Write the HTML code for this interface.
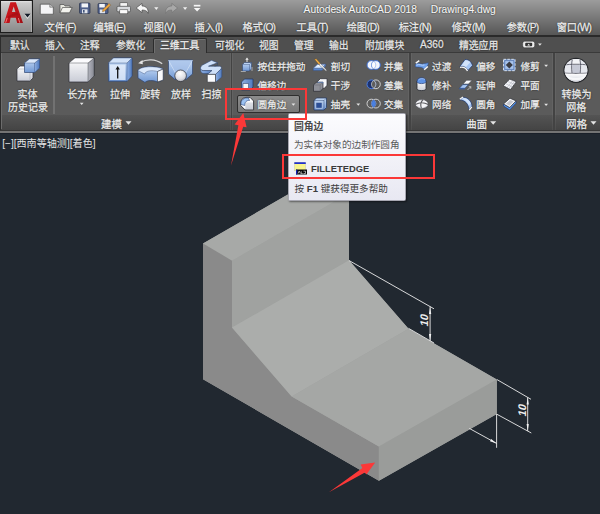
<!DOCTYPE html>
<html><head><meta charset="utf-8">
<style>
html,body{margin:0;padding:0;}
body{width:600px;height:514px;overflow:hidden;position:relative;background:#212830;font-family:"Liberation Sans","Noto Sans CJK SC",sans-serif;}
.abs{position:absolute;}
.t{position:absolute;white-space:nowrap;line-height:1;color:#e6e6e6;}
.m,.tb,.rl{-webkit-text-stroke:0.300px #e8e8e8;text-shadow:0 0 1.200px rgba(0,0,0,0.850),0 0 1.200px rgba(0,0,0,0.700);}
#title{left:0;top:0;width:600px;height:35px;background:linear-gradient(#9c9c9c,#565656);}
#menu{left:0;top:34.600px;width:600px;height:2.400px;background:#2a2a2a;}
#tabs{left:0;top:37px;width:600px;height:16.300px;background:#4f4f4f;border-bottom:1.300px solid #3a3a3a;box-sizing:border-box;}
#ribbon{left:0;top:53.300px;width:600px;height:62.100px;background:#5b5b5b;}
#rtitle{left:0;top:115.400px;width:600px;height:14.200px;background:linear-gradient(#545454,#444444);}
#rbot{left:0;top:129.600px;width:600px;height:4.900px;background:linear-gradient(#363636 0,#363636 1.200px,#747474 1.200px,#747474 3.400px,#1a2029 3.400px);}
.l{letter-spacing:-0.800px;}
.m{font-size:10.200px;top:22.800px;color:#f0f0f0;}
.tb{font-size:9.8px;top:40.5px;color:#e0e0e0;}
.rl{font-size:10px;color:#ececec;}
.sep{position:absolute;width:1.400px;background:#434343;top:53.300px;height:76.500px;box-shadow:-1px 0 0 rgba(255,255,255,0.050),1px 0 0 rgba(255,255,255,0.050);}
</style></head><body>
<div id="title" class="abs"></div>
<div id="menu" class="abs"></div>
<div id="tabs" class="abs"></div>
<div id="ribbon" class="abs"></div>
<div id="rtitle" class="abs"></div>
<div id="rbot" class="abs"></div>

<!-- app button -->
<div class="abs" style="left:0;top:0;width:33px;height:33px;background:#1c1c1c;"></div>
<div class="abs" style="left:1.200px;top:0.800px;width:30.600px;height:31.400px;background:linear-gradient(#e6e6e6 0,#cbcbcb 2px,#aaaaaa 50%,#8b8b8b 100%);box-shadow:inset -0.800px 0 0 #b4b4b4;"></div>
<svg class="abs" style="left:0;top:0;" width="34" height="34" viewBox="0 0 34 34">
<defs><linearGradient id="ga" x1="0" y1="0" x2="1" y2="1"><stop offset="0" stop-color="#d81e24"/><stop offset="0.5" stop-color="#c0141a"/><stop offset="1" stop-color="#a00c12"/></linearGradient></defs>
<path fill-rule="evenodd" d="M10.400,2.300L15.900,2.300L23,23L17.200,23L15.800,17.700L10.600,17.700L9.600,23L4,23Z M13.700,6.600L15.400,11.900L11.900,11.900Z" fill="url(#ga)"/>
<path d="M8,16.500C11,14.500 14.500,13 17.500,12.300L18.500,15C15,15.300 11.500,16.300 8.500,18.500Z" fill="#9c0c12" opacity="0.550"/>
<path d="M5.800,22.300l1.300,-4M19.600,22.300l-1.100,-3.800" stroke="#f27878" stroke-width="1" fill="none" stroke-linecap="round"/>
<path d="M24.300,14.600h6.400l-3.200,4.500z" fill="#e4e4e4"/>
<path d="M24.500,13.700h6l-3,3.700z" fill="#141c28"/>
</svg>
<!-- title text -->
<span class="t" style="left:303.600px;top:4.500px;font-size:10.250px;color:#f6f6f6;-webkit-text-stroke:0.200px #f6f6f6;text-shadow:0 0 1.200px rgba(0,0,0,0.800),0 0 1.200px rgba(0,0,0,0.600);">Autodesk AutoCAD 2018</span>
<span class="t" style="left:430.800px;top:4.500px;font-size:10.250px;color:#f6f6f6;-webkit-text-stroke:0.200px #f6f6f6;text-shadow:0 0 1.200px rgba(0,0,0,0.800),0 0 1.200px rgba(0,0,0,0.600);">Drawing4.dwg</span>

<!-- menu -->
<span class="t m" style="left:44.5px;">文件<span class="l">(F)</span></span>
<span class="t m" style="left:93.5px;">编辑<span class="l">(E)</span></span>
<span class="t m" style="left:143.5px;">视图<span class="l">(V)</span></span>
<span class="t m" style="left:194.5px;">插入<span class="l">(I)</span></span>
<span class="t m" style="left:242.5px;">格式<span class="l">(O)</span></span>
<span class="t m" style="left:296.5px;">工具<span class="l">(T)</span></span>
<span class="t m" style="left:346.7px;">绘图<span class="l">(D)</span></span>
<span class="t m" style="left:398.7px;">标注<span class="l">(N)</span></span>
<span class="t m" style="left:451.7px;">修改<span class="l">(M)</span></span>
<span class="t m" style="left:506.7px;">参数<span class="l">(P)</span></span>
<span class="t m" style="left:556.7px;">窗口<span class="l">(W)</span></span>

<!-- tabs -->
<div class="abs" style="left:153.300px;top:38px;width:53.500px;height:15.400px;background:#5b5b5b;border:1.200px solid #2c2c2c;border-bottom:none;box-sizing:border-box;border-radius:2px 2px 0 0;box-shadow:inset 1px 1px 0 #707070;"></div>
<span class="t tb" style="left:10px;">默认</span>
<span class="t tb" style="left:45px;">插入</span>
<span class="t tb" style="left:80px;">注释</span>
<span class="t tb" style="left:116px;">参数化</span>
<span class="t tb" style="left:160px;color:#fff;">三维工具</span>
<span class="t tb" style="left:215px;">可视化</span>
<span class="t tb" style="left:259px;">视图</span>
<span class="t tb" style="left:294px;">管理</span>
<span class="t tb" style="left:329px;">输出</span>
<span class="t tb" style="left:365px;">附加模块</span>
<span class="t tb" style="left:420px;font-size:10.100px;top:40.300px;">A360</span>
<span class="t tb" style="left:459px;">精选应用</span>

<div class="abs" style="left:0;top:37px;width:1.400px;height:93px;background:#2c2c2c;"></div><div class="abs" style="left:1.400px;top:53.300px;width:1.100px;height:76px;background:#6c6c6c;"></div>
<!-- ribbon separators -->
<div class="abs" style="left:53px;top:56px;width:2.100px;height:58px;background:#727272;"></div>
<div class="sep" style="left:230.900px;"></div>
<div class="sep" style="left:409.300px;"></div>
<div class="sep" style="left:553.300px;"></div>

<div class="abs" style="left:237px;top:94.700px;width:63px;height:18.300px;box-sizing:border-box;border:1.100px solid #2e2e2e;border-radius:2px;background:linear-gradient(#8c8c8c,#828282 50%,#797979);"></div>
<!-- ribbon labels -->
<span class="t rl" style="left:17.6px;top:89.5px;">实体</span>
<span class="t rl" style="left:8px;top:102.800px;">历史记录</span>
<span class="t rl" style="left:67.2px;top:89.5px;">长方体</span>
<span class="t rl" style="left:110px;top:89.5px;">拉伸</span>
<span class="t rl" style="left:140.3px;top:89.5px;">旋转</span>
<span class="t rl" style="left:171px;top:89.5px;">放样</span>
<span class="t rl" style="left:201.4px;top:89.5px;">扫掠</span>
<span class="t rl" style="left:101px;top:119.700px;font-size:10.400px;">建模</span>

<span class="t rl" style="left:257.5px;top:61.9px;font-size:9.600px;">按住并拖动</span>
<span class="t rl" style="left:257.5px;top:80.9px;font-size:9.600px;">偏移边</span>
<span class="t rl" style="left:257.5px;top:99.9px;font-size:9.600px;">圆角边</span>
<span class="t rl" style="left:330.8px;top:61.9px;font-size:9.600px;">剖切</span>
<span class="t rl" style="left:330.8px;top:80.9px;font-size:9.600px;">干涉</span>
<span class="t rl" style="left:330.8px;top:99.9px;font-size:9.600px;">抽壳</span>
<span class="t rl" style="left:384px;top:61.9px;font-size:9.600px;">并集</span>
<span class="t rl" style="left:384px;top:80.9px;font-size:9.600px;">差集</span>
<span class="t rl" style="left:384px;top:99.9px;font-size:9.600px;">交集</span>
<span class="t rl" style="left:432.1px;top:61.9px;font-size:9.600px;">过渡</span>
<span class="t rl" style="left:432.1px;top:80.9px;font-size:9.600px;">修补</span>
<span class="t rl" style="left:432.1px;top:99.9px;font-size:9.600px;">网络</span>
<span class="t rl" style="left:476.2px;top:61.9px;font-size:9.600px;">偏移</span>
<span class="t rl" style="left:476.2px;top:80.9px;font-size:9.600px;">延伸</span>
<span class="t rl" style="left:476.2px;top:99.9px;font-size:9.600px;">圆角</span>
<span class="t rl" style="left:520.5px;top:61.9px;font-size:9.600px;">修剪</span>
<span class="t rl" style="left:520.5px;top:80.9px;font-size:9.600px;">平面</span>
<span class="t rl" style="left:520.5px;top:99.9px;font-size:9.600px;">加厚</span>
<span class="t rl" style="left:466.3px;top:119.700px;font-size:10.400px;">曲面</span>
<span class="t rl" style="left:561.5px;top:89.5px;">转换为</span>
<span class="t rl" style="left:566.3px;top:102.800px;">网格</span>
<span class="t rl" style="left:566.3px;top:119.700px;font-size:10.400px;">网格</span>


<!-- ICONS -->
<svg class="abs" style="left:0;top:0;" width="600" height="133" viewBox="0 0 600 133">
<defs>
<linearGradient id="gw" x1="0" y1="0" x2="0" y2="1"><stop offset="0" stop-color="#ffffff"/><stop offset="1" stop-color="#c9ccd6"/></linearGradient>
<linearGradient id="gb" x1="0" y1="0" x2="0" y2="1"><stop offset="0" stop-color="#c5daf5"/><stop offset="1" stop-color="#6f97d4"/></linearGradient>
<linearGradient id="gb2" x1="0" y1="0" x2="1" y2="0"><stop offset="0" stop-color="#8fb0e2"/><stop offset="1" stop-color="#4f79bd"/></linearGradient>
<linearGradient id="gg" x1="0" y1="0" x2="1" y2="0"><stop offset="0" stop-color="#b4b6bf"/><stop offset="1" stop-color="#888a94"/></linearGradient>
<radialGradient id="gs" cx="0.45" cy="0.3" r="0.7"><stop offset="0" stop-color="#ffffff"/><stop offset="0.7" stop-color="#dcdde2"/><stop offset="1" stop-color="#a9abb3"/></radialGradient>
</defs>
<!-- QAT -->
<g id="qat">
<path d="M40.300,4.200h9.500l3.500,3v7h-13z" fill="#f4f4f6" stroke="#3a3a3a" stroke-width="0.600"/>
<path d="M49.800,4.200v3h3.500" fill="#cfcfcf" stroke="#3a3a3a" stroke-width="0.500"/>
<path d="M60,12.5v-8h4l1,1.5h5v2" fill="#e8e8e0" stroke="#3a3a3a" stroke-width="0.6"/>
<path d="M60,12.8l2.5,-5.3h9.7l-2.7,5.3z" fill="#f3f3ee" stroke="#3a3a3a" stroke-width="0.6"/>
<rect x="79.500" y="3" width="10.500" height="10.500" rx="1" fill="#50618c" stroke="#28324a" stroke-width="0.700"/>
<rect x="81.5" y="3.4" width="6.5" height="4" fill="#f2f4f8"/>
<rect x="82" y="9.3" width="5.5" height="4" fill="#dfe3ea"/><rect x="83" y="10" width="1.6" height="2.6" fill="#44557a"/>
<rect x="98" y="3.500" width="10" height="10" rx="1" fill="#50618c" stroke="#28324a" stroke-width="0.700"/>
<rect x="99.3" y="3.9" width="5.5" height="3.6" fill="#f2f4f8"/>
<rect x="99.8" y="9.5" width="5.2" height="3.8" fill="#dfe3ea"/>
<path d="M103,9.5l6,-6l1.6,1.6l-6,6l-2.2,0.6z" fill="#f0a63a" stroke="#6b4a1a" stroke-width="0.4"/>
<rect x="120" y="2.8" width="7.5" height="4" fill="#f4f4f4" stroke="#3a3a3a" stroke-width="0.5"/>
<rect x="117" y="6.3" width="13.5" height="5.5" rx="1" fill="#d8dadd" stroke="#3a3a3a" stroke-width="0.6"/>
<rect x="119.8" y="9.8" width="8" height="4" fill="#fbfbfb" stroke="#3a3a3a" stroke-width="0.5"/>
<path d="M136.200,8L142,3.400L142,6C146.500,6 148.400,9 148.200,13.400C147,10.800 145,10 142,10L142,12.600Z" fill="#f6f6f6" stroke="#3c3c3c" stroke-width="0.600" stroke-linejoin="round"/>
<path d="M154.200,7.300h4.200l-2.100,2.800z" fill="#f0f0f0"/>
<path d="M177.600,8L171.800,3.400L171.800,6C167.300,6 165.400,9 165.600,13.400C166.800,10.800 168.800,10 171.800,10L171.800,12.600Z" fill="#a8a8a8" stroke="#707070" stroke-width="0.600" stroke-linejoin="round"/>
<path d="M183,7.300h4.200l-2.100,2.800z" fill="#f0f0f0"/>
<rect x="193.800" y="4.800" width="6.600" height="1.700" fill="#f6f6f6"/><path d="M193.800,7.900h6.600l-3.300,3.600z" fill="#f6f6f6"/>
</g>

<!-- big icons -->
<g stroke="#2b2d33" stroke-width="0.7" stroke-linejoin="round">
<!-- solid history -->
<path d="M17,69l3,-3h13v12l-3,3h-13z" fill="url(#gw)"/>
<path d="M30,69v12M17,69h13l3,-3" fill="none" stroke="#9a9ca6" stroke-width="0.5"/>
<path d="M24.5,63l5,-4h10v9l-5,4.5h-10z" fill="url(#gb)" stroke="#2f4673"/>
<path d="M34.5,63l5,-4v9l-5,4.5z" fill="url(#gb2)" stroke="#2f4673" stroke-width="0.4"/>
<path d="M24.5,63h10l5,-4h-10z" fill="#dbe8fa" stroke="#2f4673" stroke-width="0.4"/>
<!-- box -->
<path d="M69,63l6,-5h19v18l-6,6h-19z" fill="url(#gw)"/>
<path d="M88,63l6,-5v18l-6,6z" fill="url(#gg)" stroke-width="0.4"/>
<path d="M69,63h19l6,-5h-19z" fill="#fbfbfd" stroke-width="0.4"/>
<!-- extrude -->
<path d="M108.5,63l5,-5h18.5v18l-5,5.3h-18.5z" fill="url(#gb)" stroke="#2f4673"/>
<path d="M127,63l5,-5v18l-5,5.3z" fill="url(#gb2)" stroke="#2f4673" stroke-width="0.4"/>
<path d="M108.5,63h18.500l5,-5h-18.500z" fill="#d3e3f8" stroke="#2f4673" stroke-width="0.4"/>
<rect x="110" y="64.500" width="15.500" height="15.500" fill="#eef4fd" stroke="none" opacity="0.75"/>
<path d="M117.700,78.500v-10" stroke="#111" stroke-width="1.300"/><path d="M115.500,69.500l2.200,-3.500l2.200,3.500z" fill="#111" stroke="none"/>
<!-- revolve -->
<path d="M138,70.500C140,66 156,65.500 163.200,69L163.200,80L157.500,82C153,80 147,80 145,82.500L138,78Z" fill="url(#gb)" stroke="#2f4673"/>
<path d="M138,70.500C140,66 156,65.500 163.200,69L157.500,71.500C152,70 146,70.500 144.500,74Z" fill="#dbe8fa" stroke="#2f4673" stroke-width="0.400"/>
<path d="M157.500,71.500L163.200,69L163.200,80L157.500,82Z" fill="#f8f9fc" stroke="#2b2d33" stroke-width="0.600"/>
<path d="M140.500,62.300c6,-3.500 15,-3.500 21.700,1.400" fill="none" stroke="#d6d6d6" stroke-width="1.300"/>
<path d="M138.200,63.300l4.300,-3.300l0.300,4.300z" fill="#e6e6e6" stroke="none"/>
<!-- loft -->
<path d="M168.500,60h24v14l-6.500,5.500h-11l-6.500,-5.500z" fill="url(#gb)" stroke="#2f4673"/>
<path d="M168.500,60l7,13M192.500,60l-7,13" stroke="#e4eefb" stroke-width="0.600" fill="none"/>
<path d="M168.500,60h24l-7,12h-10z" fill="#a9c3ea" stroke="none" opacity="0.700"/>
<circle cx="180.600" cy="75.800" r="5.800" fill="url(#gs)" stroke="#2b2d33"/>
<!-- sweep -->
<path d="M200.800,67.500C200,70.500 201,73.500 204,73.500L208.500,73.500L212,70.500L203.500,70.500C201.500,70.500 200.800,69 200.800,67.500Z" fill="url(#gb2)" stroke="#2f4673" stroke-width="0.500"/>
<path d="M215.500,74.400L220.500,69.500C222,68 222,70 221.800,72L221.800,77L215.500,82.200Z" fill="url(#gb2)" stroke="#2f4673" stroke-width="0.500"/>
<path d="M211.500,60.300L217.500,62.800L208.500,66.200L219.500,66.200C221.500,66.200 222,68 220.500,69.500L215.500,74.400L207.300,74.400L212,70.500L203.500,70.500C200,70.500 199.500,67 202.500,65Z" fill="#cfe0f8" stroke="#2f4673" stroke-width="0.600"/>
<path d="M217.500,62.800v2.500l-3,1" fill="none" stroke="#2f4673" stroke-width="0.500"/>
<rect x="207.300" y="74.400" width="8.200" height="7.800" fill="#fafbfd" stroke="#2b2d33" stroke-width="0.600"/>
</g>

<!-- dropdown arrows -->
<g fill="#e4e4e4">
<path d="M79.800,102.700h3.800l-1.900,2.200z"/>
<path d="M125.500,121.300h6l-3,3.400z"/>
<path d="M490.200,121.300h6l-3,3.400z"/>
<path d="M590.500,121.300h6l-3,3.400z"/>
<path d="M291.500,103.500h3.800l-1.900,2.200z"/>
<path d="M356.400,103.500h3.800l-1.900,2.200z"/>
<path d="M544.200,64.800h3.800l-1.900,2.200z"/>
<path d="M544.200,103.800h3.800l-1.900,2.200z"/>
</g>
<!-- small icons col 1 -->
<g stroke-linejoin="round">
<!-- presspull -->
<path d="M242.500,64.500l2,-2h7v6.500l-2,2h-7z" fill="url(#gb)" stroke="#2f4673" stroke-width="0.600"/>
<path d="M242.500,64.500h7l2,-2M249.500,64.500v6.500" fill="none" stroke="#2f4673" stroke-width="0.400"/>
<path d="M247,62v-3" stroke="#f0f0f0" stroke-width="1"/><path d="M245.300,59.800l1.700,-2.300l1.700,2.300z" fill="#f0f0f0"/>
<path d="M240.800,71.500h5M252,67v4" stroke="#ddd" stroke-width="0.600"/>
<!-- offset edge -->
<path d="M241.500,82l3,-3h8.500v8l-3,3h-8.500z" fill="url(#gb2)" stroke="#20355f" stroke-width="0.700"/>
<rect x="243" y="83.500" width="5.500" height="5.500" fill="#f4f6fa" stroke="#20355f" stroke-width="0.500"/>
<!-- fillet edge -->
<path d="M241,102C241,99 244,97.300 247,97.300L250,97.300L253.600,101L253.600,109.800L245,109.800L240.600,105.500Z" fill="#fbfbfd" stroke="#2b2d33" stroke-width="0.900"/>
<rect x="245.400" y="102.400" width="7.600" height="6.800" fill="url(#gw)" opacity="0.900"/>
<rect x="245.400" y="102.400" width="7.600" height="6.800" fill="#c4c8d4" opacity="0.550"/>
<path d="M241,104.500C240.500,100 244,97.500 248.500,98L249.500,100.500C247,100 244.500,102 244.800,105.500Z" fill="#9cc2f2" stroke="#2a437a" stroke-width="0.600"/>
<!-- slice -->
<path d="M313.300,68.300l4.200,-4h8.300l-3.800,4.500h-8.700z" fill="#b9d3f8" stroke="#3a5fa8" stroke-width="0.500"/>
<path d="M313.300,68.800h8.700l3.800,-4.500v1.500l-3.800,4.700h-8.700z" fill="#5f8fdc" stroke="#2f4673" stroke-width="0.400"/>
<path d="M315.500,66.800l2.500,-1.800h4l-2,1.800z" fill="#f4f8fe"/>
<path d="M314.500,59.300l1.800,-0.500l4.200,4.700l-1.500,1.300z" fill="#f2b04a" stroke="#6b4a1a" stroke-width="0.400"/>
<path d="M319,64.800l1.500,-1.300l6.200,6.700l-0.600,1z" fill="#f4f4f4" stroke="#444" stroke-width="0.400"/>
<!-- interfere -->
<path d="M317.500,81.500l2.800,-2.800h6.700v6.800l-2.800,2.800h-6.700z" fill="#f6f7fa" stroke="#2b2d33" stroke-width="0.700"/>
<path d="M313.500,85l2.800,-2.800h6.700v6.300l-2.800,2.800h-6.700z" fill="#8e9098" stroke="#2b2d33" stroke-width="0.700"/>
<path d="M313.500,85h6.700l2.800,-2.800M320.200,85v6.300" fill="none" stroke="#5a5c64" stroke-width="0.400"/>
<path d="M317.500,82.300h5.500v1.200" fill="none" stroke="#5f8fdc" stroke-width="0.600"/>
<!-- shell -->
<path d="M314,100.500l2.500,-2.500h10v9.500l-2.500,2.500h-10z" fill="url(#gb)" stroke="#20355f" stroke-width="0.700"/>
<path d="M314,100.500h10l2.500,-2.500M324,100.500v9.500" fill="none" stroke="#20355f" stroke-width="0.400"/>
<rect x="315.800" y="102.300" width="6.400" height="6" fill="#2c4f96" stroke="#dfe9f8" stroke-width="0.600"/>
<!-- union -->
<circle cx="371.400" cy="65" r="4.400" fill="#f2f6fd" stroke="#3a6cd0" stroke-width="1"/>
<circle cx="375.900" cy="65" r="4.400" fill="#f2f6fd" stroke="#3a6cd0" stroke-width="1"/>
<path d="M373.650,61.22a4.400,4.400 0 0 1 0,7.560a4.400,4.400 0 0 1 0,-7.560z" fill="#fbfcff" stroke="#6f97e0" stroke-width="0.500"/>
<!-- subtract -->
<circle cx="375.900" cy="84.300" r="4.400" fill="none" stroke="#dcdcdc" stroke-width="0.900"/>
<circle cx="371.400" cy="84.300" r="4.400" fill="#1c3270" stroke="#4a7ce0" stroke-width="1"/>
<path d="M373.650,80.52a4.400,4.400 0 0 1 0,7.560a4.400,4.400 0 0 1 0,-7.560z" fill="#5d5d5d" stroke="#dcdcdc" stroke-width="0.700"/>
<!-- intersect -->
<circle cx="371.400" cy="103.600" r="4.400" fill="none" stroke="#dcdcdc" stroke-width="0.900"/>
<circle cx="375.900" cy="103.600" r="4.400" fill="none" stroke="#dcdcdc" stroke-width="0.900"/>
<path d="M373.650,99.82a4.400,4.400 0 0 1 0,7.560a4.400,4.400 0 0 1 0,-7.560z" fill="#4a80e0" stroke="#2c54a8" stroke-width="0.500"/>
</g>

<g stroke-linejoin="round">
<!-- blend -->
<path d="M415.300,64.500C418,61.500 421,64.800 423.500,63.800L428.300,62.800C428.300,65.500 426.500,68 424,69.300C421.500,66.300 419,67.800 415.300,66.800Z" fill="#6fa0ea" stroke="#2f4f8c" stroke-width="0.600"/>
<path d="M416.500,65.300C419,63.300 421.500,66 424.500,65" fill="none" stroke="#b9d3f8" stroke-width="1"/>
<path d="M415.800,63.200L419.300,60.700M424.200,69.800L427.800,66.500" stroke="#f6f6f6" stroke-width="1.500" fill="none"/>
<!-- patch -->
<path d="M417,81v7.800c0,2.400 9,2.400 9,0v-7.800z" fill="url(#gw)" stroke="#26282e" stroke-width="0.800"/>
<path d="M417,81.500c0,-5 9,-5 9,0c0,2.800 -9,2.800 -9,0z" fill="#5e92e4" stroke="#26407c" stroke-width="0.700"/>
<path d="M418.500,80c1,-1.600 5,-1.800 6.500,-0.500" fill="none" stroke="#a9c8f6" stroke-width="0.800"/>
<!-- network -->
<ellipse cx="421.800" cy="104" rx="6.400" ry="4.400" fill="#f4f4f7" stroke="#3a3c44" stroke-width="0.500"/>
<path d="M415.400,104.500Q421.800,101 428.200,104.500M422.800,99.600Q419.500,104 421.500,108.400" fill="none" stroke="#5a5a5e" stroke-width="1.100"/>
<path d="M417,106c1.500,1.500 3,2 4.500,2.200M424,107.800c1.500,-0.500 3,-1.300 3.800,-2.600" fill="none" stroke="#b0b2ba" stroke-width="0.800"/>
<!-- surf offset -->
<path d="M459.800,66.500L465,59.500C468.500,59.300 471.500,61.500 472.500,65.500L468,70.500C466.500,67.500 464,66 459.800,66.500Z" fill="#a6c6f4" stroke="#1f3566" stroke-width="0.700"/>
<path d="M461.500,65.500L465.500,60.300C467.500,60.300 469,61 470.300,62.300L466,67C464.800,66 463.300,65.500 461.500,65.500Z" fill="#d2e3fb" stroke="none"/>
<path d="M460,67.300C463.500,66.800 466,68 467.500,71" fill="none" stroke="#f8f8f8" stroke-width="1.300"/>
<!-- extend -->
<path d="M463,84L466.500,80.300H472L468.500,84Z" fill="#f6f7fa" stroke="#3a3c44" stroke-width="0.500"/>
<path d="M459.300,88.300L462.800,84.600H468.500L465,88.300Z" fill="#a6c6f4" stroke="#1f3566" stroke-width="0.600"/>
<path d="M459.300,88.300h5.700v1h-5.700z" fill="#3a64b4"/>
<path d="M467.500,90l3.300,-3.300M470.800,86.700v2M470.800,86.700h-2" stroke="#d8d8d8" stroke-width="0.700" fill="none"/>
<!-- fillet -->
<path d="M459.800,99.800L463.300,97.300C468,97.500 471.500,101 472,106L469,110C468.800,104.500 465.500,100.500 459.800,99.800Z" fill="#a6c6f4" stroke="#1f3566" stroke-width="0.700"/>
<path d="M462,99L463.800,98C467,98.400 469.500,100.500 470.800,103.500L468.800,105.500C467.500,102.300 465.300,100 462,99Z" fill="#d2e3fb" stroke="none"/>
<path d="M459.800,99.300L463,97M469.300,110.200L471.800,106.800" stroke="#f8f8f8" stroke-width="1.200" fill="none"/>
<!-- trim -->
<rect x="503.500" y="59.300" width="11.600" height="11.400" fill="#7da6e6" stroke="#f0f4fa" stroke-width="0.800" stroke-dasharray="2.500,1.400"/>
<rect x="504.800" y="60.600" width="9" height="8.800" fill="#a8c4ee" stroke="#2f4673" stroke-width="0.400"/>
<path d="M509.300,61.500l3.500,3.500l-3.500,3.500l-3.500,-3.500z" fill="#3a3c44"/>
<!-- planar -->
<path d="M503.300,85.700L509.700,79.100L516.300,81.800L510.500,89.600Z" fill="#f2f3f6" stroke="#2e3036" stroke-width="0.700"/>
<path d="M505.400,83.500L512.400,87M507.500,81.300L514.400,84.400M506.900,87.600L513,80.400M508.700,88.600L514.700,81.100" fill="none" stroke="#a9acb8" stroke-width="0.500"/>
<!-- thicken -->
<path d="M503.500,104L503.500,106L509.700,110L516,103.200L516,100.900L509.700,107.500Z" fill="#5a9cf0" stroke="#1f3a78" stroke-width="0.700"/>
<path d="M503.500,104L510,98.200L516,100.900L509.700,107.500Z" fill="#f4f5f8" stroke="#2e3036" stroke-width="0.700"/>
<path d="M506,103.800L510.200,100L513.500,101.500L509.500,105.700Z" fill="#c4c6ce" stroke="none"/>
<!-- sphere -->
<clipPath id="cs"><circle cx="576" cy="70.300" r="11.300"/></clipPath>
<circle cx="576" cy="70.300" r="12" fill="#fdfdfe" stroke="#26282c" stroke-width="1.200"/>
<g clip-path="url(#cs)">
<rect x="560" y="56" width="32" height="17" fill="#e6e8ee"/>
<rect x="572.300" y="65" width="7.600" height="8" fill="#c6c9d5"/>
<rect x="572.300" y="58" width="7.600" height="6.500" fill="#f2f3f6"/>
<path d="M572.500,58.500C571.400,63 571.400,68 572,73M579.700,58.500C580.800,63 580.800,68 580.200,73" fill="none" stroke="#4c4e5a" stroke-width="0.800"/>
<path d="M564,65C570,64 582,64 588,65M563,73C570,73.600 582,73.600 589,73" fill="none" stroke="#4c4e5a" stroke-width="0.800"/>
<path d="M563,73.500C570,74.100 582,74.100 589,73.500L589,83L563,83Z" fill="url(#gw)"/>
<path d="M566,75C570,79 582,79 586,75C584,82 568,82 566,75Z" fill="#ffffff" opacity="0.700"/>
</g>
<!-- tab-bar small button -->
<rect x="522.700" y="41.200" width="12" height="6.600" rx="2" fill="#ececec" stroke="#2b2b2b" stroke-width="0.500"/>
<rect x="525.200" y="42.800" width="7" height="3.400" rx="1" fill="#333"/>
<path d="M527.300,45.600h2.800l-1.400,-1.800z" fill="#f4f4f4"/>
<path d="M538,43.600h3.800l-1.900,2.100z" fill="#e4e4e4"/>
</g>

</svg>

<!-- viewport label -->
<span class="t" style="left:2.200px;top:139.300px;font-size:10.100px;color:#e4e4e4;">[−][西南等轴测][着色]</span>

<!-- drawing -->
<svg class="abs" style="left:0;top:133px;" width="600" height="381" viewBox="0 133 600 381">
<polygon points="203,243.500 320,176 349,193.200 349,260.300 408.500,328.700 496.800,379.500 496.800,414 378.900,480.700 203,379.200" fill="#a0a2a0"/>
<polygon points="203,243.500 232,260.700 349,193.200 320,176" fill="#a7a9a7"/>
<polygon points="203,243.500 232,260.700 232,327.600 291.700,396.400 378.900,446.600 378.900,480.700 203,379.200" fill="#8a8a8a"/>
<polygon points="232,260.700 349,193.200 349,260.300 232,327.600" fill="#a0a2a0"/>
<polygon points="232,327.600 349,260.300 408.500,328.700 291.700,396.400" fill="#abadab"/>
<polygon points="291.700,396.400 408.500,328.700 496.800,379.500 378.900,446.600" fill="#a5a7a5"/>
<polygon points="378.900,446.600 496.800,379.500 496.800,414 378.900,480.700" fill="#9a9c9a"/>
<g stroke="#ececec" stroke-width="0.9" fill="none">
<line x1="349" y1="260.5" x2="434" y2="308.8"/>
<line x1="408.5" y1="328.3" x2="434" y2="343"/>
<line x1="430.1" y1="306.5" x2="430.1" y2="341"/>
<line x1="497" y1="379.6" x2="531" y2="399.3"/>
<line x1="497" y1="414.3" x2="531.3" y2="433"/>
<line x1="527.7" y1="397.3" x2="527.7" y2="431"/>
<line x1="496.6" y1="414" x2="496.6" y2="447.8"/>
<line x1="469.3" y1="428.4" x2="496.6" y2="443.4"/>
</g>
<g fill="#f2f2f2">
<polygon points="430.1,307 429,314 431.2,314"/>
<polygon points="430.1,341 429,334 431.2,334"/>
<polygon points="527.7,397.5 526.6,404.5 528.8,404.5"/>
<polygon points="527.7,431 526.6,424 528.8,424"/>
<polygon points="496.6,443.4 490,441.2 491.2,439"/>
</g>
<text transform="translate(428,321) rotate(-90) skewX(-14)" font-size="11" font-weight="bold" fill="#efefef" text-anchor="middle" font-family="Liberation Sans, sans-serif">10</text>
<text transform="translate(525.600,411) rotate(-90) skewX(-14)" font-size="11" font-weight="bold" fill="#efefef" text-anchor="middle" font-family="Liberation Sans, sans-serif">10</text>
</svg>

<!-- tooltip -->
<div class="abs" style="left:288.300px;top:112.800px;width:118px;height:88px;background:linear-gradient(#fcfcfe,#e8e8f2);border:1px solid #a8a8b2;border-radius:1.500px;box-sizing:border-box;box-shadow:1px 1px 2px rgba(0,0,0,0.450);"></div>
<span class="t" style="left:294px;top:121.600px;font-size:9.800px;font-weight:bold;color:#4a4a4a;">圆角边</span>
<span class="t" style="left:294px;top:140px;font-size:9.6px;color:#5a5a5a;">为实体对象的边制作圆角</span>
<div class="abs" style="left:292px;top:154px;width:111px;height:1px;background:#c8c8d0;"></div>
<svg class="abs" style="left:293px;top:161px;" width="16" height="15" viewBox="293 161 16 15">
<rect x="294.500" y="162.300" width="11" height="8.500" fill="#f7f48c" stroke="#c9c9b0" stroke-width="0.500"/>
<rect x="294.300" y="162.200" width="11.500" height="1.700" rx="0.500" fill="#1f2fd0"/>
<rect x="296" y="169.500" width="11" height="5" fill="#0a0a0a"/>
<rect x="296" y="169.500" width="1.300" height="5" fill="#1420b0"/>
<path d="M298,173.500l1.200,-2.500l1.200,2.500M301.200,171.200v2.300h1.500M303.500,171.200h2v2.300h-2" fill="none" stroke="#fff" stroke-width="0.600"/>
</svg>
<span class="t" style="left:311px;top:164.400px;font-size:9.400px;font-weight:bold;color:#3a3a3a;">FILLETEDGE</span>
<span class="t" style="left:294.600px;top:184px;font-size:9.600px;color:#3c3c3c;">按 <b>F1</b> 键获得更多帮助</span>

<svg class="abs" style="left:0;top:0;" width="600" height="514" viewBox="0 0 600 514">
<!-- red arrows -->
<polygon points="243.300,113 234.600,124.400 238.400,125.200 231,165.500 243.200,126.700 246.600,127.200" fill="#fb3838"/>
<polygon points="375.200,462.600 360.600,464.400 362.400,468 328.900,492.200 364.900,472.400 366.400,474.600" fill="#fb3838"/>
</svg>
<!-- red boxes -->
<div class="abs" style="left:225px;top:88px;width:81.500px;height:32px;border:2.500px solid #fb3838;box-sizing:border-box;"></div>
<div class="abs" style="left:282.400px;top:154.100px;width:152.500px;height:25px;border:2.500px solid #fb3838;box-sizing:border-box;"></div>
</body></html>
